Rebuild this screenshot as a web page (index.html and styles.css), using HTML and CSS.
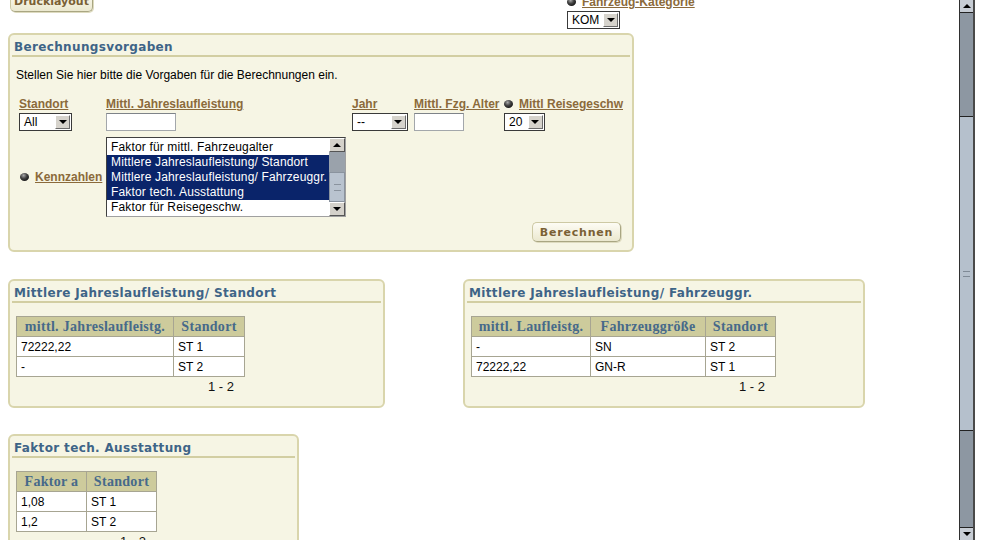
FILE: index.html
```html
<!DOCTYPE html>
<html lang="de">
<head>
    <meta charset="UTF-8">
    <title>Berechnungsvorgaben</title>
    <link rel="stylesheet" href="styles.css">
</head>
<body>
<div class="page">
    <div class="topbar">
        <button class="btn btn-druck">Drucklayout</button>
        <div class="kat">
            <div class="kat-label"><span class="ball"></span><a class="lbl">Fahrzeug-Kategorie</a></div>
            <div class="combo w53"><span class="combo-val">KOM</span><span class="combo-btn"><i></i></span></div>
        </div>
    </div>

    <div class="panel panel-main">
        <div class="panel-title">Berechnungsvorgaben</div>
        <div class="panel-body">
            <p class="intro">Stellen Sie hier bitte die Vorgaben für die Berechnungen ein.</p>

            <div class="fields">
                <div class="field f-standort">
                    <a class="lbl">Standort</a>
                    <div class="combo w53"><span class="combo-val">All</span><span class="combo-btn"><i></i></span></div>
                </div>
                <div class="field f-jahresl">
                    <a class="lbl">Mittl. Jahreslaufleistung</a>
                    <input class="txt w70" type="text">
                </div>
                <div class="field f-jahr">
                    <a class="lbl">Jahr</a>
                    <div class="combo w56"><span class="combo-val">--</span><span class="combo-btn"><i></i></span></div>
                </div>
                <div class="field f-alter">
                    <a class="lbl">Mittl. Fzg. Alter</a>
                    <input class="txt w50" type="text">
                </div>
                <div class="field">
                    <div class="lbl-row"><span class="ball"></span><a class="lbl">Mittl Reisegeschw</a></div>
                    <div class="combo w41"><span class="combo-val">20</span><span class="combo-btn"><i></i></span></div>
                </div>
            </div>

            <div class="kennzahlen">
                <div class="kz-label"><span class="ball"></span><a class="lbl">Kennzahlen</a></div>
                <div class="listbox">
                    <ul class="list-items">
                        <li>Faktor für mittl. Fahrzeugalter</li>
                        <li class="sel">Mittlere Jahreslaufleistung/ Standort</li>
                        <li class="sel">Mittlere Jahreslaufleistung/ Fahrzeuggr.</li>
                        <li class="sel">Faktor tech. Ausstattung</li>
                        <li>Faktor für Reisegeschw.</li>
                    </ul>
                    <div class="list-scroll">
                        <span class="sb-btn up"><i></i></span>
                        <span class="sb-track"></span>
                        <span class="sb-thumb"><i></i></span>
                        <span class="sb-btn down"><i></i></span>
                    </div>
                </div>
            </div>

            <div class="actions">
                <button class="btn btn-calc">Berechnen</button>
            </div>
        </div>
    </div>

    <div class="row">
        <div class="panel panel-standort">
            <div class="panel-title">Mittlere Jahreslaufleistung/ Standort</div>
            <div class="tbl-wrap">
                <table class="data">
                    <tr><th class="c157">mittl. Jahreslaufleistg.</th><th class="c71">Standort</th></tr>
                    <tr><td>72222,22</td><td>ST 1</td></tr>
                    <tr><td>-</td><td>ST 2</td></tr>
                </table>
                <div class="pager">1 - 2</div>
            </div>
        </div>

        <div class="panel panel-groesse">
            <div class="panel-title">Mittlere Jahreslaufleistung/ Fahrzeuggr.</div>
            <div class="tbl-wrap">
                <table class="data">
                    <tr><th class="c119">mittl. Laufleistg.</th><th class="c115">Fahrzeuggröße</th><th class="c70">Standort</th></tr>
                    <tr><td>-</td><td>SN</td><td>ST 2</td></tr>
                    <tr><td>72222,22</td><td>GN-R</td><td>ST 1</td></tr>
                </table>
                <div class="pager">1 - 2</div>
            </div>
        </div>
    </div>

    <div class="panel panel-ausst">
        <div class="panel-title">Faktor tech. Ausstattung</div>
        <div class="tbl-wrap">
            <table class="data">
                <tr><th class="c70">Faktor a</th><th class="c70">Standort</th></tr>
                <tr><td>1,08</td><td>ST 1</td></tr>
                <tr><td>1,2</td><td>ST 2</td></tr>
            </table>
            <div class="pager">1 - 2</div>
        </div>
    </div>
</div>

<div class="vscroll">
    <span class="vs-btn up"><i></i></span>
    <span class="vs-track top"></span>
    <span class="vs-thumb"><i></i></span>
    <span class="vs-track bottom"></span>
    <span class="vs-btn down"><i></i></span>
</div>
</body>
</html>
```

FILE: styles.css
```css
html, body {
    margin: 0;
    height: 540px;
    overflow: hidden;
    background: #fff;
}
body {
    display: flex;
    font-family: "Liberation Sans", Arial, sans-serif;
    font-size: 12px;
    color: #000;
}
.page {
    width: 959px;
    flex: none;
    box-sizing: border-box;
    padding: 0 8px;
    margin-top: -9px;
}

/* top bar */
.topbar {
    display: flex;
    align-items: flex-start;
    height: 42px;
}
.btn {
    font-family: "DejaVu Sans", Verdana, sans-serif;
    font-weight: bold;
    font-size: 11px;
    letter-spacing: 0.8px;
    color: #7a6034;
    background: linear-gradient(#fdfcf4, #ebe8cf);
    border: 1px solid #cdc9a4;
    border-right-color: #a9a682;
    border-bottom-color: #a9a682;
    border-radius: 5px;
    height: 21px;
    padding: 0 7px;
    box-shadow: 1px 1px 0 #dedbbf;
}
.btn-druck {
    margin-left: 2px;
    width: 83px;
    padding: 0;
    letter-spacing: 0;
}
.kat {
    margin-left: 474px;
    padding-top: 4px;
}
.kat-label {
    display: flex;
    align-items: center;
    height: 14px;
}
.kat .combo {
    margin-top: 2px;
}
.lbl {
    font-weight: bold;
    font-size: 12px;
    color: #8b6a3b;
    text-decoration: underline;
    white-space: nowrap;
}
.ball {
    display: inline-block;
    width: 9px;
    height: 8px;
    border-radius: 50%;
    background: radial-gradient(circle at 40% 30%, #aaa 0, #444 40%, #111 80%);
    margin-right: 6px;
}

/* panels */
.panel {
    background: #f6f5e4;
    border: 2px solid #d9d5ac;
    border-radius: 6px;
    padding: 4px 2px 9px;
    box-sizing: border-box;
}
.panel-title {
    font-family: "DejaVu Sans", Verdana, sans-serif;
    font-weight: bold;
    font-size: 12px;
    letter-spacing: 0.35px;
    line-height: 16px;
    color: #3e6487;
    padding: 0 2px;
    border-bottom: 2px solid #d2cea2;
    white-space: nowrap;
}
.panel-main {
    width: 626px;
    padding-bottom: 8px;
}
.panel-body {
    padding: 0 7px 0 4px;
}
.intro {
    margin: 11px 0 0;
    line-height: 14px;
    font-size: 12px;
}

/* fields */
.fields {
    display: flex;
    margin-top: 15px;
    padding-left: 3px;
}
.field .lbl,
.field .lbl-row {
    display: flex;
    align-items: center;
    height: 14px;
    margin-bottom: 2px;
}
.field .lbl-row .lbl {
    margin: 0;
}
.f-standort { width: 87px; }
.f-jahresl { width: 246px; }
.f-jahr { width: 62px; }
.f-alter { width: 90px; }

.combo {
    display: flex;
    height: 18px;
    box-sizing: border-box;
    border: 1px solid #3a3a3a;
    background: #fff;
}
.combo-val {
    flex: 1;
    padding-left: 4px;
    line-height: 16px;
    font-size: 12px;
}
.combo-btn {
    width: 15px;
    box-sizing: border-box;
    background: #d6d3cc;
    border: 1px solid;
    border-color: #fff #6c6c6c #6c6c6c #fff;
    display: flex;
    align-items: center;
    justify-content: center;
    margin: 1px;
}
.combo-btn i,
.sb-btn.down i,
.vs-btn.down i {
    width: 0;
    height: 0;
    border-left: 4px solid transparent;
    border-right: 4px solid transparent;
    border-top: 4px solid #000;
}
.sb-btn.up i,
.vs-btn.up i {
    width: 0;
    height: 0;
    border-left: 4px solid transparent;
    border-right: 4px solid transparent;
    border-bottom: 4px solid #000;
}
.w41 { width: 41px; }
.w53 { width: 53px; }
.w56 { width: 56px; }
.w70 { width: 70px; }
.w50 { width: 50px; }

.txt {
    height: 18px;
    box-sizing: border-box;
    border: 1px solid #a3a7ab;
    border-top-color: #7e8388;
    background: #fff;
    margin: 0;
    padding: 0 2px;
}

/* Kennzahlen list */
.kennzahlen {
    display: flex;
    align-items: center;
    margin-top: 6px;
    padding-left: 3px;
}
.kz-label {
    width: 87px;
    display: flex;
    align-items: center;
    padding-left: 1px;
    box-sizing: border-box;
}
.listbox {
    width: 240px;
    height: 80px;
    box-sizing: border-box;
    border: 1px solid;
    border-color: #404040 #a0a0a0 #a0a0a0 #404040;
    background: #fff;
    display: flex;
}
.list-items {
    flex: 1;
    list-style: none;
    margin: 0;
    padding: 2px 0 0;
}
.list-items li {
    height: 15px;
    line-height: 15px;
    padding-left: 4px;
    white-space: nowrap;
    font-size: 12px;
    letter-spacing: 0.15px;
}
.list-items li.sel {
    background: #0a246a;
    color: #fff;
}
.list-scroll {
    width: 16px;
    display: flex;
    flex-direction: column;
}
.sb-btn {
    height: 14px;
    box-sizing: border-box;
    background: #d4d1ca;
    border: 1px solid;
    border-color: #fff #555 #555 #fff;
    display: flex;
    align-items: center;
    justify-content: center;
}
.sb-track {
    height: 20px;
    background: #9aa2ab;
}
.sb-thumb {
    flex: 1;
    background: #b9c3cf;
    border: 1px solid #8a939e;
    display: flex;
    align-items: center;
    justify-content: center;
}
.sb-thumb i {
    width: 7px;
    height: 5px;
    border-top: 1px solid #8a939e;
    border-bottom: 1px solid #8a939e;
}

.actions {
    display: flex;
    justify-content: flex-end;
    margin-top: 5px;
    padding-right: 2px;
}
.btn-calc {
    width: 89px;
    height: 20px;
    padding: 0;
}

/* result panels */
.row {
    display: flex;
    margin-top: 27px;
}
.panel-standort { width: 377px; }
.panel-groesse { width: 402px; margin-left: 78px; }
.panel-ausst { width: 291px; margin-top: 26px; }

.tbl-wrap {
    display: inline-block;
    margin: 13px 0 0 4px;
}
.data {
    border-collapse: collapse;
    background: #fff;
}
.data th,
.data td {
    border: 1px solid #a7a592;
    height: 20px;
    padding: 0 5px;
    box-sizing: border-box;
    white-space: nowrap;
}
.data th {
    background: #cdcb9c;
    font-family: "Liberation Serif", "Times New Roman", serif;
    font-weight: bold;
    font-size: 14px;
    letter-spacing: 0.3px;
    color: #46698a;
    text-align: center;
}
.data td {
    font-size: 12px;
    text-align: left;
    padding-left: 4px;
}
.c157 { width: 157px; }
.c119 { width: 119px; }
.c115 { width: 115px; }
.c71 { width: 71px; }
.c70 { width: 70px; }
.pager {
    text-align: right;
    font-size: 13px;
    line-height: 20px;
    padding-right: 11px;
    color: #111;
}

/* window scrollbar */
.vscroll {
    width: 16px;
    height: 540px;
    flex: none;
    box-sizing: border-box;
    border-left: 1px solid #2f2f2f;
    border-right: 2px solid #4a4a4a;
    display: flex;
    flex-direction: column;
    background: #8d97a2;
}
.vs-btn {
    height: 12px;
    flex: none;
    background: #c6ccd4;
    border-bottom: 1px solid #222;
    display: flex;
    align-items: center;
    justify-content: center;
}
.vs-btn.down {
    border-bottom: 0;
    border-top: 1px solid #222;
}
.vs-track.top { height: 103px; }
.vs-track.bottom { flex: 1; }
.vs-thumb {
    height: 315px;
    box-sizing: border-box;
    background: #b5c0cc;
    border-top: 1px solid #222;
    border-bottom: 1px solid #222;
    display: flex;
    align-items: center;
    justify-content: center;
}
.vs-thumb i {
    width: 7px;
    height: 4px;
    border-top: 1px solid #7f8a96;
    border-bottom: 1px solid #7f8a96;
}
```
